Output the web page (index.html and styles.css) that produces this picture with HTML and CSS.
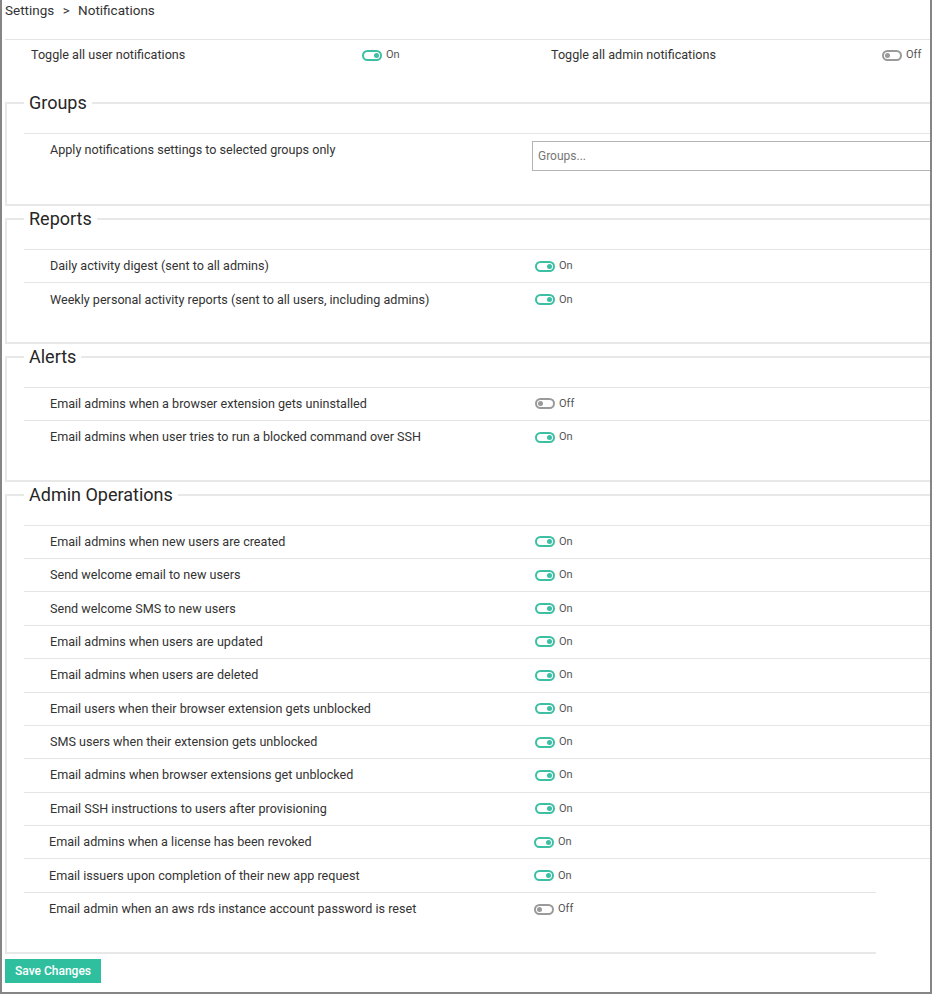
FILE: index.html
```html
<!DOCTYPE html>
<html>
<head>
<meta charset="utf-8">
<link rel="stylesheet" href="styles.css">
</head>
<body>
<div class="frame">
  <div class="breadcrumb">Settings <span class="sep">&gt;</span> Notifications</div>
  <div class="toggle-all">
    <div class="ta-cell"><span class="ta-label">Toggle all user notifications</span><span class="tg on"><span class="sw"><span class="knob"></span></span>On</span></div>
    <div class="ta-cell"><span class="ta-label">Toggle all admin notifications</span><span class="tg off"><span class="sw"><span class="knob"></span></span>Off</span></div>
  </div>

  <fieldset class="group group-first">
    <legend>Groups</legend>
    <div class="rows">
      <div class="row row-groups"><span class="label">Apply notifications settings to selected groups only</span><input class="groups-input" type="text" placeholder="Groups..."></div>
    </div>
  </fieldset>

  <fieldset class="group">
    <legend>Reports</legend>
    <div class="rows">
      <div class="row"><span class="label">Daily activity digest (sent to all admins)</span><span class="tg on"><span class="sw"><span class="knob"></span></span>On</span></div>
      <div class="row"><span class="label">Weekly personal activity reports (sent to all users, including admins)</span><span class="tg on"><span class="sw"><span class="knob"></span></span>On</span></div>
    </div>
  </fieldset>

  <fieldset class="group">
    <legend>Alerts</legend>
    <div class="rows">
      <div class="row"><span class="label">Email admins when a browser extension gets uninstalled</span><span class="tg off"><span class="sw"><span class="knob"></span></span>Off</span></div>
      <div class="row"><span class="label">Email admins when user tries to run a blocked command over SSH</span><span class="tg on"><span class="sw"><span class="knob"></span></span>On</span></div>
    </div>
  </fieldset>

  <fieldset class="group group-last">
    <legend>Admin Operations</legend>
    <div class="rows">
      <div class="row"><span class="label">Email admins when new users are created</span><span class="tg on"><span class="sw"><span class="knob"></span></span>On</span></div>
      <div class="row"><span class="label">Send welcome email to new users</span><span class="tg on"><span class="sw"><span class="knob"></span></span>On</span></div>
      <div class="row"><span class="label">Send welcome SMS to new users</span><span class="tg on"><span class="sw"><span class="knob"></span></span>On</span></div>
      <div class="row"><span class="label">Email admins when users are updated</span><span class="tg on"><span class="sw"><span class="knob"></span></span>On</span></div>
      <div class="row"><span class="label">Email admins when users are deleted</span><span class="tg on"><span class="sw"><span class="knob"></span></span>On</span></div>
      <div class="row"><span class="label">Email users when their browser extension gets unblocked</span><span class="tg on"><span class="sw"><span class="knob"></span></span>On</span></div>
      <div class="row"><span class="label">SMS users when their extension gets unblocked</span><span class="tg on"><span class="sw"><span class="knob"></span></span>On</span></div>
      <div class="row"><span class="label">Email admins when browser extensions get unblocked</span><span class="tg on"><span class="sw"><span class="knob"></span></span>On</span></div>
      <div class="row"><span class="label">Email SSH instructions to users after provisioning</span><span class="tg on"><span class="sw"><span class="knob"></span></span>On</span></div>
      <div class="row row-shift"><span class="label">Email admins when a license has been revoked</span><span class="tg on"><span class="sw"><span class="knob"></span></span>On</span></div>
      <div class="row row-shift"><span class="label">Email issuers upon completion of their new app request</span><span class="tg on"><span class="sw"><span class="knob"></span></span>On</span></div>
      <div class="row row-shift row-short"><span class="label">Email admin when an aws rds instance account password is reset</span><span class="tg off"><span class="sw"><span class="knob"></span></span>Off</span></div>
    </div>
    <div class="foot"></div>
  </fieldset>

  <button class="save" type="button">Save Changes</button>
</div>
</body>
</html>
```

FILE: styles.css
```css
html, body {
  margin: 0;
  padding: 0;
  background: #ffffff;
}

body {
  font-family: Roboto, "Liberation Sans", Arial, sans-serif;
  color: #333333;
}

.frame {
  width: 932px;
  height: 994px;
  box-sizing: border-box;
  border: 2px solid #858585;
  border-top: 0;
  padding-left: 3px;
  overflow: hidden;
}

.breadcrumb {
  height: 39px;
  font-size: 13.5px;
  line-height: 21px;
  color: #333333;
}

.breadcrumb .sep {
  margin: 0 5px;
}

.toggle-all {
  display: grid;
  grid-template-columns: 520px 520px;
  border-top: 1px solid #e4e4e4;
  height: 30px;
  box-sizing: border-box;
  padding-top: 1px;
  align-items: center;
  margin-right: -60px;
}

.ta-cell {
  display: flex;
  align-items: center;
  padding-left: 26px;
}

.ta-label {
  width: 331px;
  font-size: 12.6px;
  line-height: 20px;
}

/* toggle */
.tg {
  display: inline-flex;
  align-items: center;
  font-size: 11px;
  line-height: 14px;
  color: #555555;
  gap: 4px;
}

.sw {
  width: 20px;
  height: 11px;
  box-sizing: border-box;
  border: 2px solid #3dbfa4;
  border-radius: 6px;
  display: inline-flex;
  align-items: center;
  padding: 0 1px;
}

.knob {
  width: 5px;
  height: 5px;
  border-radius: 50%;
  background: #3dbfa4;
}

.tg.on .sw {
  justify-content: flex-end;
}

.tg.off .sw {
  border-color: #9a9a9a;
  justify-content: flex-start;
}

.tg.off .knob {
  background: #9a9a9a;
}

/* fieldsets */
.group {
  margin: 2px -60px 0 0;
  padding: 0 0 26px 17px;
  border: 2px solid #e8e8e8;
  border-right: 0;
  min-width: 0;
}

.group-first {
  margin-top: 23px;
}

.group legend {
  font-size: 18px;
  line-height: 22px;
  padding: 0 5px;
  color: #262626;
}

.rows {
  margin-top: 19px;
}

.row {
  display: grid;
  grid-template-columns: 485px 1fr;
  align-items: center;
  border-top: 1px solid #e4e4e4;
  padding-left: 26px;
  height: 33.4px;
  box-sizing: border-box;
  font-size: 12.6px;
  line-height: 20px;
}

.row-groups {
  align-items: start;
  height: 45px;
  padding-top: 6px;
  grid-template-columns: 482px 1fr;
}

.groups-input {
  width: 420px;
  height: 30px;
  box-sizing: border-box;
  margin-top: 1px;
  border: 1px solid #b4b4b4;
  padding: 0 5px;
  font-family: Roboto, "Liberation Sans", Arial, sans-serif;
  font-size: 12px;
  color: #333333;
  outline: none;
}

.groups-input::placeholder {
  color: #777777;
}

.row-shift {
  padding-left: 25px;
}

.row-short {
  margin-right: 114px;
}

.group-last {
  border-bottom: 0;
  padding-bottom: 0;
}

.group-last .foot {
  height: 27px;
  margin-left: -19px;
  width: 871px;
  border-bottom: 2px solid #e8e8e8;
}

.save {
  display: block;
  margin-top: 5px;
  width: 96px;
  height: 24px;
  border: 0;
  border-radius: 0;
  background: #2fbf9f;
  color: #ffffff;
  font-family: Roboto, "Liberation Sans", Arial, sans-serif;
  font-size: 12px;
  font-weight: 500;
  padding: 0;
}
```
